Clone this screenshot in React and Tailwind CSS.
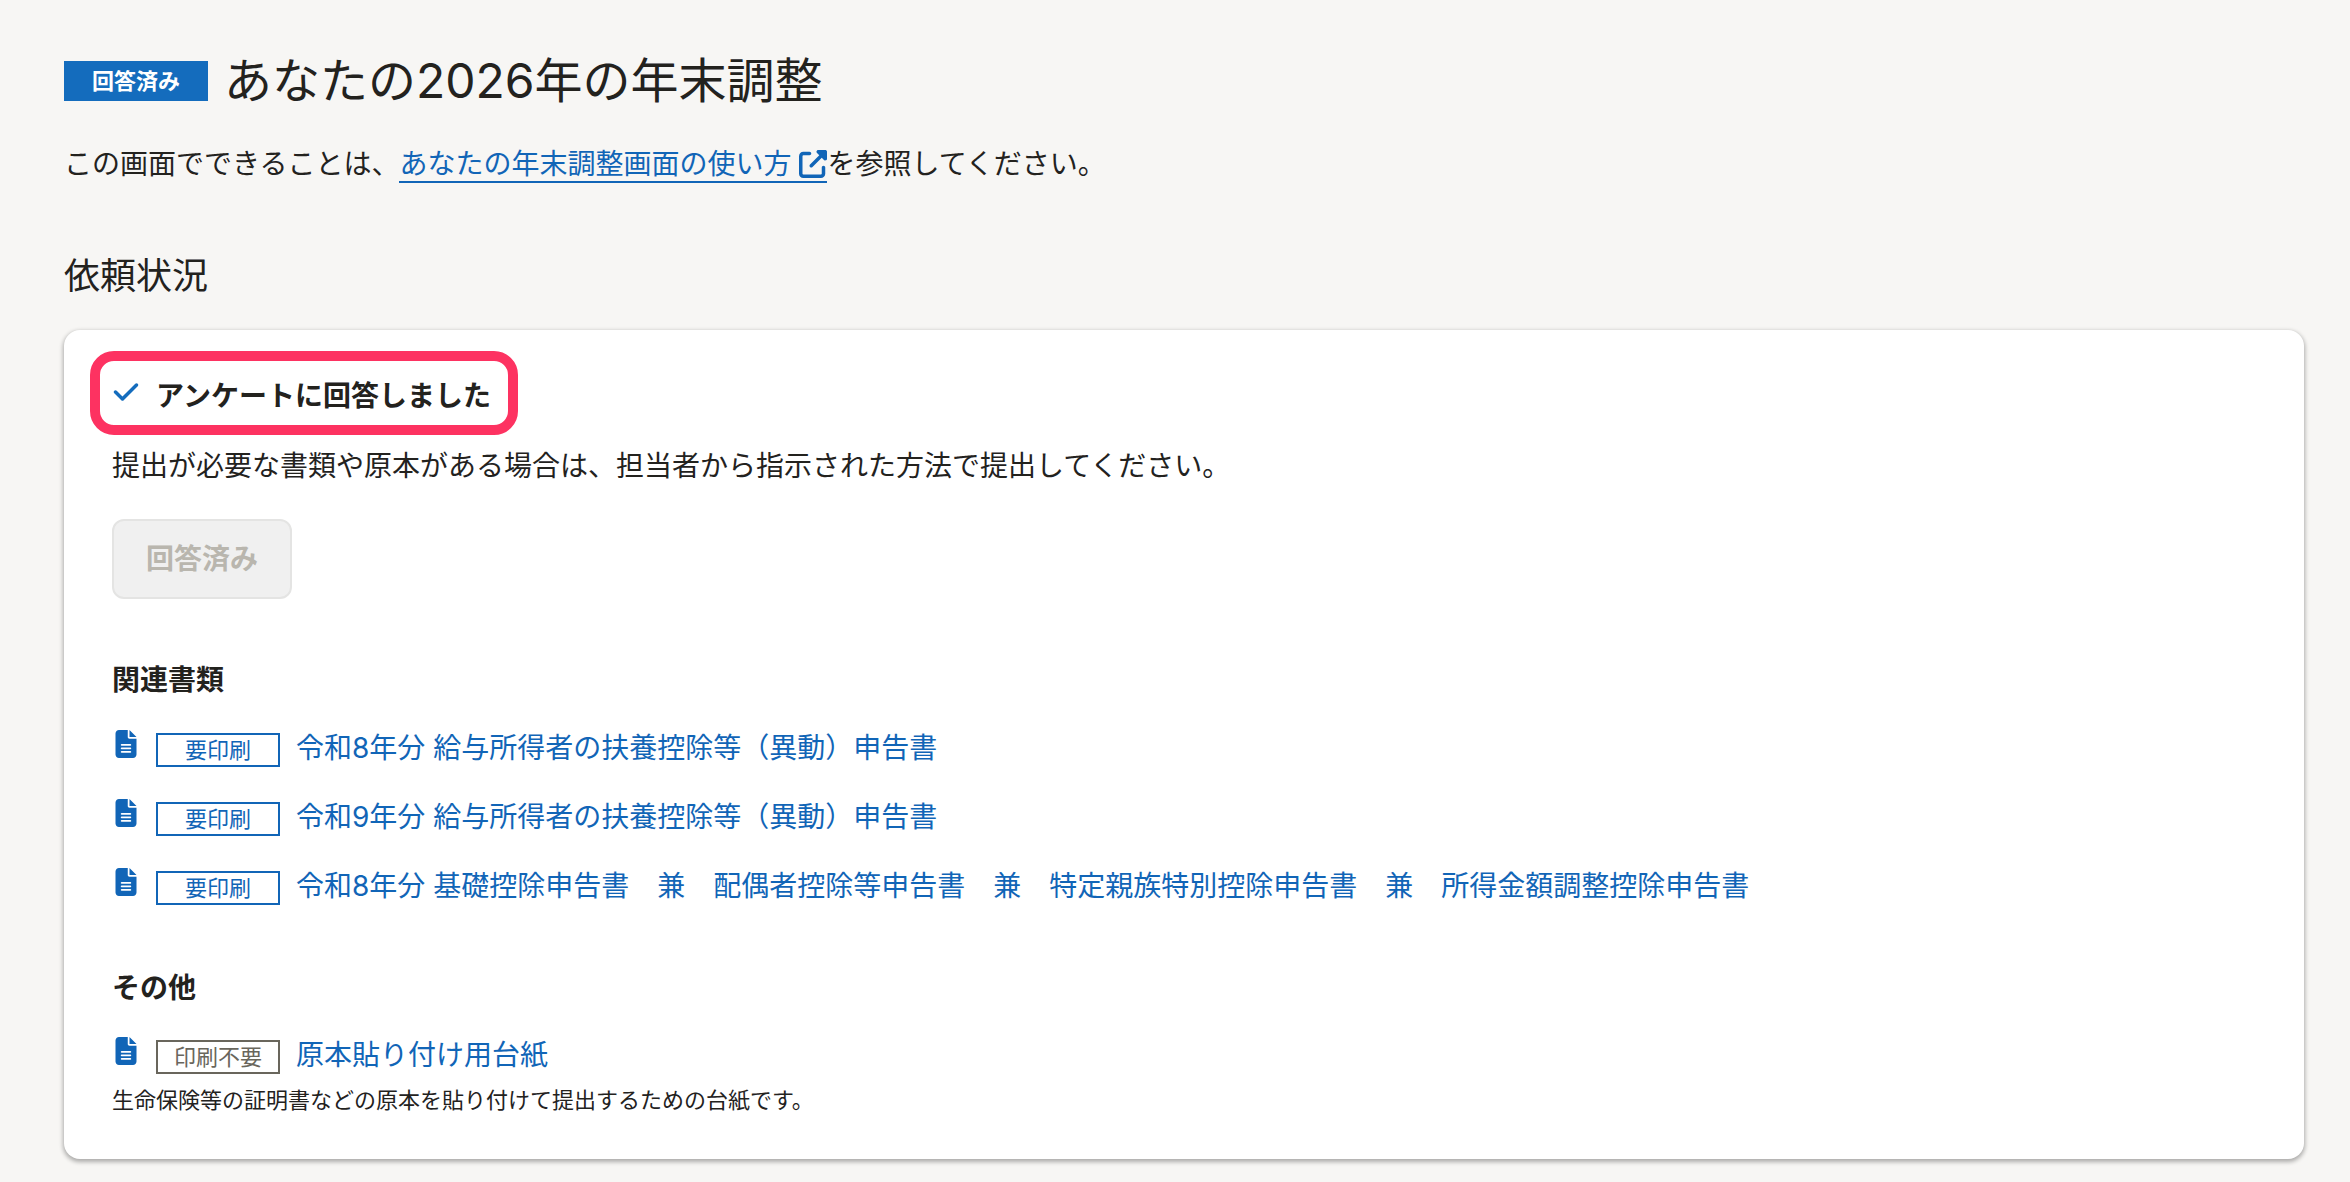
import React from "react";
import { FaCheck, FaFileLines, FaUpRightFromSquare } from "react-icons/fa6";

const related = [
  "令和8年分 給与所得者の扶養控除等（異動）申告書",
  "令和9年分 給与所得者の扶養控除等（異動）申告書",
  "令和8年分 基礎控除申告書　兼　配偶者控除等申告書　兼　特定親族特別控除申告書　兼　所得金額調整控除申告書",
];

function DocumentRow({ tag, required, title }) {
  return (
    <div className="flex items-start gap-4">
      <FaFileLines className="mt-[3px] size-7 shrink-0 text-[#1165b7]" aria-hidden="true" />
      <span
        className={
          required
            ? "mt-1.5 flex h-[34px] w-31 shrink-0 items-center justify-center border-2 border-[#1165b7] text-[22px] leading-none text-[#1165b7]"
            : "mt-1.5 flex h-[34px] w-31 shrink-0 items-center justify-center border-2 border-[#69665c] text-[22px] leading-none text-[#69665c]"
        }
      >
        {tag}
      </span>
      <a href="#document" className="text-[#1165b7]">
        {title}
      </a>
    </div>
  );
}

export default function App() {
  return (
    <main
      lang="ja"
      className="min-h-screen bg-[#f7f6f4] pt-[45px] pr-[46px] pb-6 pl-16 font-['Inter','Noto_Sans_CJK_JP',sans-serif] text-[28px] leading-[42px] text-[#23221e]"
    >
      <header>
        <div className="flex items-center gap-4">
          <span className="flex h-10 w-36 shrink-0 items-center justify-center bg-[#146cbd] text-[22px] leading-none font-bold text-white">
            回答済み
          </span>
          <h1 className="text-[48px] leading-[72px]">あなたの2026年の年末調整</h1>
        </div>
        <p className="mt-[26px]">
          この画面でできることは、
          <a href="#guide" className="border-b-2 border-[#1165b7] text-[#1165b7]">
            あなたの年末調整画面の使い方
            <FaUpRightFromSquare className="ml-2 inline size-7 align-[-4px]" aria-hidden="true" />
          </a>
          を参照してください。
        </p>
      </header>

      <section className="mt-16">
        <h2 className="text-[36px] leading-[54px]">依頼状況</h2>
        <div className="mt-[27px] rounded-2xl bg-white px-12 pt-[45px] pb-[42px] shadow-[0_2px_4px_1px_rgba(3,3,2,0.3)]">
          <h3 className="relative flex w-fit gap-4 font-bold">
            <FaCheck className="mt-[3px] size-7 text-[#146cbd]" aria-hidden="true" />
            アンケートに回答しました
            <span
              className="pointer-events-none absolute -top-6 -right-[27px] -bottom-[18px] -left-[22px] rounded-3xl border-10 border-[#fd3261]"
              aria-hidden="true"
            />
          </h3>
          <p className="mt-7">
            提出が必要な書類や原本がある場合は、担当者から指示された方法で提出してください。
          </p>
          <button
            type="button"
            disabled
            className="mt-8 flex h-20 w-45 items-center justify-center rounded-xl border-2 border-[#e4e4e3] bg-[#f0f0f0] font-bold text-[#b9b6ae]"
          >
            回答済み
          </button>

          <h4 className="mt-15 font-bold">関連書類</h4>
          <ul className="mt-[26px] flex flex-col gap-[27px]">
            {related.map((title) => (
              <li key={title}>
                <DocumentRow tag="要印刷" required title={title} />
              </li>
            ))}
          </ul>

          <h4 className="mt-15 font-bold">その他</h4>
          <div className="mt-[25px]">
            <DocumentRow tag="印刷不要" title="原本貼り付け用台紙" />
            <p className="mt-[7px] text-[22px] leading-[34px]">
              生命保険等の証明書などの原本を貼り付けて提出するための台紙です。
            </p>
          </div>
        </div>
      </section>
    </main>
  );
}
